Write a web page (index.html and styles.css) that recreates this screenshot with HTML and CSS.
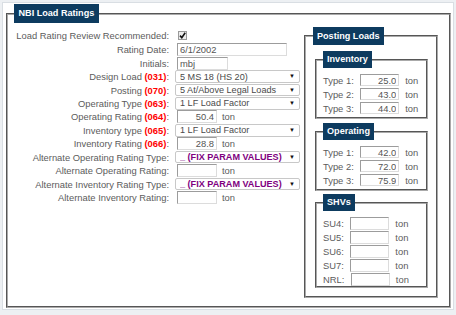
FILE: index.html
```html
<!DOCTYPE html>
<html lang="en">
<head>
  <meta charset="UTF-8">
  <title>NBI Load Ratings</title>
  <link rel="stylesheet" href="styles.css">
</head>
<body>

  <div class="page">
    <fieldset class="group main">
      <legend>NBI Load Ratings</legend>
      <div class="cols">

        <div class="fields">
          <div class="row first">
            <label class="lbl">Load Rating Review Recommended:</label>
            <span class="check">
              <svg width="9" height="9" viewBox="0 0 9 9"><path d="M2 4.6 L3.8 6.6 L7.2 1.8" fill="none" stroke="#111" stroke-width="1.6"/></svg>
            </span>
          </div>
          <div class="row">
            <label class="lbl">Rating Date:</label>
            <input class="txt date" value="6/1/2002">
          </div>
          <div class="row">
            <label class="lbl">Initials:</label>
            <input class="txt initials" value="mbj">
          </div>
          <div class="row">
            <label class="lbl">Design Load <b class="code">(031)</b>:</label>
            <span class="drop"><select class="pick"><option>5 MS 18 (HS 20)</option></select></span>
          </div>
          <div class="row">
            <label class="lbl">Posting <b class="code">(070)</b>:</label>
            <span class="drop"><select class="pick"><option>5 At/Above Legal Loads</option></select></span>
          </div>
          <div class="row">
            <label class="lbl">Operating Type <b class="code">(063)</b>:</label>
            <span class="drop"><select class="pick"><option>1 LF Load Factor</option></select></span>
          </div>
          <div class="row">
            <label class="lbl">Operating Rating <b class="code">(064)</b>:</label>
            <input class="txt num" value="50.4"><span class="unit">ton</span>
          </div>
          <div class="row">
            <label class="lbl">Inventory type <b class="code">(065)</b>:</label>
            <span class="drop"><select class="pick"><option>1 LF Load Factor</option></select></span>
          </div>
          <div class="row">
            <label class="lbl">Inventory Rating <b class="code">(066)</b>:</label>
            <input class="txt num" value="28.8"><span class="unit">ton</span>
          </div>
          <div class="row">
            <label class="lbl">Alternate Operating Rating Type:</label>
            <span class="drop"><select class="pick fix"><option>_ (FIX PARAM VALUES)</option></select></span>
          </div>
          <div class="row">
            <label class="lbl">Alternate Operating Rating:</label>
            <input class="txt num"><span class="unit">ton</span>
          </div>
          <div class="row">
            <label class="lbl">Alternate Inventory Rating Type:</label>
            <span class="drop"><select class="pick fix"><option>_ (FIX PARAM VALUES)</option></select></span>
          </div>
          <div class="row">
            <label class="lbl">Alternate Inventory Rating:</label>
            <input class="txt num"><span class="unit">ton</span>
          </div>
        </div>

        <fieldset class="group posting">
          <legend>Posting Loads</legend>

          <fieldset class="group sub">
            <legend>Inventory</legend>
            <div class="trow"><label>Type 1:</label><input class="txt val" value="25.0"><span class="unit">ton</span></div>
            <div class="trow"><label>Type 2:</label><input class="txt val" value="43.0"><span class="unit">ton</span></div>
            <div class="trow"><label>Type 3:</label><input class="txt val" value="44.0"><span class="unit">ton</span></div>
          </fieldset>

          <fieldset class="group sub operating">
            <legend>Operating</legend>
            <div class="trow"><label>Type 1:</label><input class="txt val" value="42.0"><span class="unit">ton</span></div>
            <div class="trow"><label>Type 2:</label><input class="txt val" value="72.0"><span class="unit">ton</span></div>
            <div class="trow"><label>Type 3:</label><input class="txt val" value="75.9"><span class="unit">ton</span></div>
          </fieldset>

          <fieldset class="group sub shv">
            <legend>SHVs</legend>
            <div class="trow"><label>SU4:</label><input class="txt val"><span class="unit">ton</span></div>
            <div class="trow"><label>SU5:</label><input class="txt val"><span class="unit">ton</span></div>
            <div class="trow"><label>SU6:</label><input class="txt val"><span class="unit">ton</span></div>
            <div class="trow"><label>SU7:</label><input class="txt val"><span class="unit">ton</span></div>
            <div class="trow"><label>NRL:</label><input class="txt val"><span class="unit">ton</span></div>
          </fieldset>
        </fieldset>

      </div>
    </fieldset>
  </div>

</body>
</html>
```

FILE: styles.css
```css
body {
  margin: 0;
  background: #edf0f3;
  font-family: "Liberation Sans", Arial, sans-serif;
  font-size: 9.4px;
  color: #5c5c5c;
}
.page {
  margin: 2px 2px 0;
  background: #fff;
  border: 1px solid #d9dee3;
  padding: 1px 2px 1px 3px;
}
.group {
  margin: 0;
  padding: 0;
  min-width: 0;
  border: 2px groove #aaa;
}
.group legend {
  background: #0d3b5f;
  color: #fff;
  font-weight: bold;
  font-size: 9.1px;
  padding: 0 4px;
  line-height: 17px;
}
.main {
  padding-bottom: 8px;
}
.main > legend {
  margin-left: 6px;
  padding: 0 4.5px;
  line-height: 19px;
}
.cols {
  display: flex;
  padding-top: 4px;
}
.fields {
  width: 296px;
  padding-top: 0.5px;
}
.row {
  display: flex;
  align-items: center;
  height: 13.45px;
}
.row.first {
  height: 15.5px;
}
.lbl {
  width: 161px;
  text-align: right;
  flex-shrink: 0;
}
.code {
  color: #f00;
}
.check {
  margin-left: 9px;
  width: 9px;
  height: 9px;
  box-sizing: border-box;
  border: 1px solid #9a9a9a;
  background: #ececec;
  display: flex;
}
.check svg {
  margin: -1px;
}
.txt {
  box-sizing: border-box;
  height: 13px;
  margin: 0 0 0 8px;
  padding: 0 2px;
  border: 1px solid;
  border-color: #9c9c9c #dcdcdc #dcdcdc #9c9c9c;
  font: inherit;
  color: #555;
  background: #fff;
}
.date {
  width: 110px;
}
.initials {
  width: 51px;
}
.num {
  width: 40px;
  text-align: right;
}
.unit {
  margin-left: 5px;
}
.drop {
  position: relative;
  display: flex;
  margin-left: 6px;
}
.drop::after {
  content: "\25BC";
  position: absolute;
  right: 5px;
  top: 3px;
  font-size: 6px;
  line-height: 6px;
  color: #111;
  pointer-events: none;
}
.pick {
  appearance: none;
  box-sizing: border-box;
  width: 125px;
  height: 12.5px;
  margin: 0;
  padding: 0 0 0 4px;
  border: 1px solid #c8c8c8;
  border-radius: 2px;
  background: #fff;
  font: inherit;
  font-size: 9.1px;
  line-height: 10px;
  color: #4a4a4a;
}
.fix {
  color: #800080;
  font-weight: bold;
}
.posting {
  width: 134px;
  box-sizing: border-box;
  padding-bottom: 8px;
}
.posting > legend {
  margin-left: 7px;
  line-height: 18px;
}
.sub {
  width: 113px;
  box-sizing: border-box;
  margin: 6px 0 0 9px;
  padding: 5px 0 2px 6px;
}
.sub > legend {
  margin-left: 0;
}
.operating {
  margin-top: 4px;
}
.shv {
  margin-top: 3px;
  padding-bottom: 0;
}
.trow {
  display: flex;
  align-items: center;
  height: 14px;
}
.trow .txt {
  margin-left: 6.5px;
  width: 39px;
  height: 12px;
}
.shv .trow .txt {
  height: 13px;
}
.val {
  text-align: right;
}
.trow .unit {
  margin-left: 6px;
}
```
